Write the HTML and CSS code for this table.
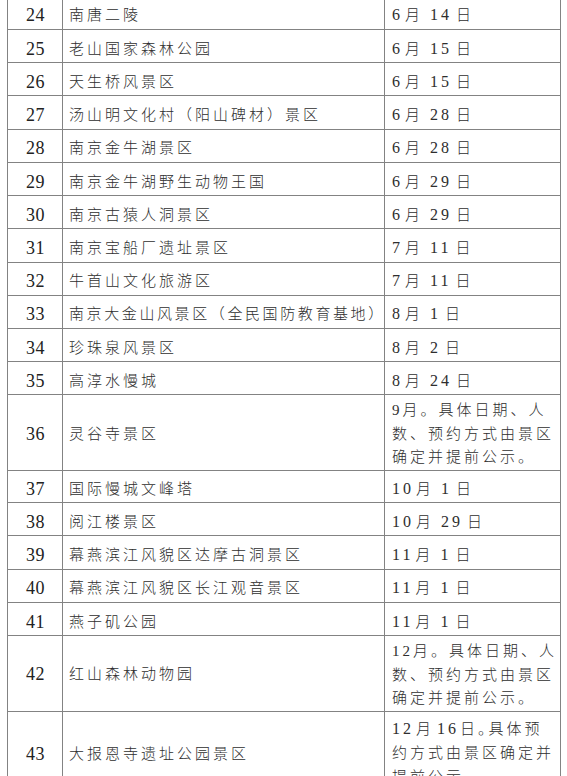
FILE: index.html
```html
<!DOCTYPE html>
<html lang="zh-CN">
<head>
<meta charset="utf-8">
<title>景区开放时间表</title>
<link rel="stylesheet" href="styles.css">
</head>
<body>
<div class="sheet">
  <div class="row"><div class="c no">24</div><div class="c name">南唐二陵</div><div class="c date"><span class="m">6</span>月<span class="n">14</span>日</div></div>
  <div class="row"><div class="c no">25</div><div class="c name">老山国家森林公园</div><div class="c date"><span class="m">6</span>月<span class="n">15</span>日</div></div>
  <div class="row"><div class="c no">26</div><div class="c name">天生桥风景区</div><div class="c date"><span class="m">6</span>月<span class="n">15</span>日</div></div>
  <div class="row"><div class="c no">27</div><div class="c name">汤山明文化村（阳山碑材）景区</div><div class="c date"><span class="m">6</span>月<span class="n">28</span>日</div></div>
  <div class="row"><div class="c no">28</div><div class="c name">南京金牛湖景区</div><div class="c date"><span class="m">6</span>月<span class="n">28</span>日</div></div>
  <div class="row"><div class="c no">29</div><div class="c name">南京金牛湖野生动物王国</div><div class="c date"><span class="m">6</span>月<span class="n">29</span>日</div></div>
  <div class="row"><div class="c no">30</div><div class="c name">南京古猿人洞景区</div><div class="c date"><span class="m">6</span>月<span class="n">29</span>日</div></div>
  <div class="row"><div class="c no">31</div><div class="c name">南京宝船厂遗址景区</div><div class="c date"><span class="m">7</span>月<span class="n">11</span>日</div></div>
  <div class="row"><div class="c no">32</div><div class="c name">牛首山文化旅游区</div><div class="c date"><span class="m">7</span>月<span class="n">11</span>日</div></div>
  <div class="row"><div class="c no">33</div><div class="c name tight">南京大金山风景区（全民国防教育基地）</div><div class="c date"><span class="m">8</span>月<span class="n">1</span>日</div></div>
  <div class="row"><div class="c no">34</div><div class="c name">珍珠泉风景区</div><div class="c date"><span class="m">8</span>月<span class="n">2</span>日</div></div>
  <div class="row"><div class="c no">35</div><div class="c name">高淳水慢城</div><div class="c date"><span class="m">8</span>月<span class="n">24</span>日</div></div>
  <div class="row tall"><div class="c no">36</div><div class="c name">灵谷寺景区</div><div class="c date multi">9月。具体日期、人<br>数、预约方式由景区<br>确定并提前公示。</div></div>
  <div class="row"><div class="c no">37</div><div class="c name">国际慢城文峰塔</div><div class="c date"><span class="m">10</span>月<span class="n">1</span>日</div></div>
  <div class="row"><div class="c no">38</div><div class="c name">阅江楼景区</div><div class="c date"><span class="m">10</span>月<span class="n">29</span>日</div></div>
  <div class="row"><div class="c no">39</div><div class="c name">幕燕滨江风貌区达摩古洞景区</div><div class="c date"><span class="m">11</span>月<span class="n">1</span>日</div></div>
  <div class="row"><div class="c no">40</div><div class="c name">幕燕滨江风貌区长江观音景区</div><div class="c date"><span class="m">11</span>月<span class="n">1</span>日</div></div>
  <div class="row"><div class="c no">41</div><div class="c name">燕子矶公园</div><div class="c date"><span class="m">11</span>月<span class="n">1</span>日</div></div>
  <div class="row tall alt"><div class="c no">42</div><div class="c name">红山森林动物园</div><div class="c date multi">12月。具体日期、人<br>数、预约方式由景区<br>确定并提前公示。</div></div>
  <div class="row last"><div class="c no">43</div><div class="c name">大报恩寺遗址公园景区</div><div class="c date multi"><span class="m">12</span>月<span class="s">16</span>日<span class="half">。</span>具体预<br>约方式由景区确定并<br>提前公示。</div></div>
</div>
</body>
</html>
```

FILE: styles.css
```css
html {
  overflow: hidden;
  background: #ffffff;
}

body {
  margin: 0;
  height: 776px;
  overflow: hidden;
  background: #ffffff;
  font-family: "Liberation Serif", "Noto Sans CJK SC", serif;
  color: #2a2a2a;
}

.sheet {
  display: flex;
  flex-direction: column;
  width: 554px;
  margin: -4.2px 0 0 7px;
  border-top: 1px solid #838383;
  border-left: 1px solid #838383;
}

.row {
  display: grid;
  grid-template-columns: 55px 322px 176px;
  height: 33.22px;
  flex: none;
}

.row.tall {
  height: 74.6px;
}

.row.tall.alt {
  height: 74.2px;
}

.row.last {
  height: 86px;
}

.c {
  box-sizing: border-box;
  border-right: 1px solid #838383;
  border-bottom: 1px solid #838383;
  display: flex;
  align-items: center;
  padding-top: 5px;
  line-height: 24px;
  white-space: nowrap;
  overflow: visible;
}

.tall .c,
.last .c {
  padding-top: 2px;
}

.no {
  justify-content: center;
  padding-left: 1px;
  font-size: 18px;
  letter-spacing: 0.5px;
  color: #222222;
}

.name {
  padding-left: 6px;
  font-size: 15px;
  letter-spacing: 3px;
  font-weight: 300;
  color: #2e2e2e;
}

.name.tight {
  letter-spacing: 2.6px;
}

.date {
  padding-left: 7px;
  font-size: 15px;
  letter-spacing: 3px;
  font-weight: 300;
  color: #2e2e2e;
}

.date.multi {
  display: block;
  align-self: stretch;
  line-height: 23.5px;
  padding-top: 4px;
}

.last .date.multi {
  line-height: 24px;
  padding-top: 7px;
}

.m {
  font-size: 16px;
  margin-right: 2px;
}

.n {
  font-size: 16px;
  margin: 0 4px 0 7px;
}

.s {
  font-size: 16px;
  margin: 0 1px 0 3px;
}

.half {
  font-feature-settings: "halt";
}
```
